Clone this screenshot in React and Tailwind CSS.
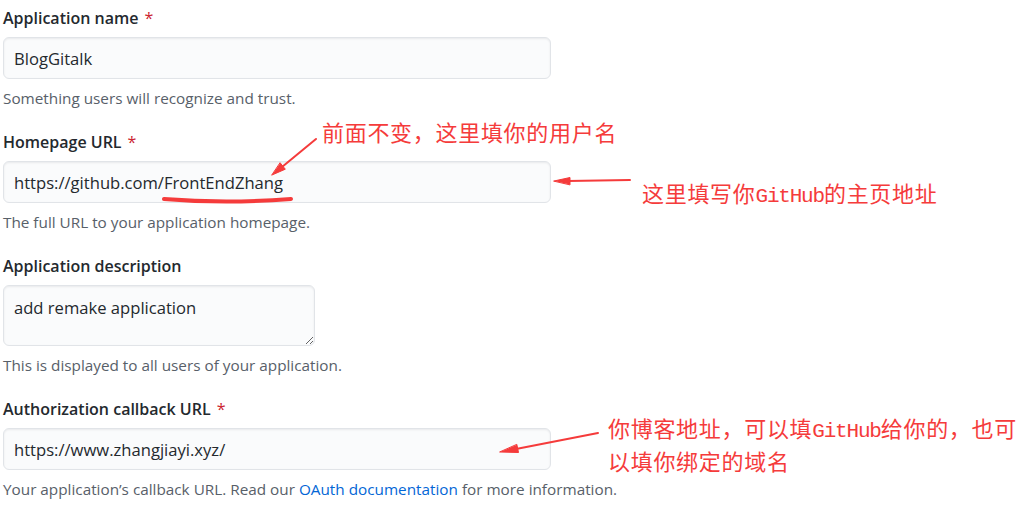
import React from 'react';

const fieldFont = { fontFamily: '"Open Sans", "Liberation Sans", sans-serif' };

const Field = ({ label, required, children, note }) => (
  <div className="flex flex-col">
    <label className="h-6 text-[16px] leading-6 font-semibold text-[#24292e]">
      {label}
      {required && <span className="ml-[6px] text-[#cb2431] font-normal">*</span>}
    </label>
    <div className="mt-[7px]">{children}</div>
    <p className="mt-2 h-[22px] text-[15.3px] leading-[22px] text-[#586069]">{note}</p>
  </div>
);

const TextInput = ({ value }) => (
  <input
    readOnly
    value={value}
    className="h-[42px] w-[548px] rounded-md border border-[#e1e4e8] bg-[#fafbfc] px-[10px] text-[16.6px] text-[#24292e] shadow-[inset_0_1px_2px_rgba(27,31,35,0.075)] outline-none"
  />
);

const GH = ({ children }) => (
  <span className="text-[21px] tracking-[-1.2px]" style={{ fontFamily: '"Liberation Mono", monospace' }}>
    {children}
  </span>
);

export default function App() {
  return (
    <div className="relative w-[1027px] h-[505px] overflow-hidden bg-white" style={fieldFont}>
      {/* Form */}
      <div className="flex flex-col gap-[21px] pl-[3px] pt-[6px]">
        <Field label="Application name" required note="Something users will recognize and trust.">
          <TextInput value="BlogGitalk" />
        </Field>
        <Field label="Homepage URL" required note="The full URL to your application homepage.">
          <TextInput value="https://github.com/FrontEndZhang" />
        </Field>
        <Field label="Application description" note="This is displayed to all users of your application.">
          <textarea
            readOnly
            defaultValue="add remake application"
            className="block h-[61px] w-[312px] rounded-md border border-[#e1e4e8] bg-[#fafbfc] px-[10px] pt-[10px] text-[16.6px] leading-6 text-[#24292e] shadow-[inset_0_1px_2px_rgba(27,31,35,0.075)] outline-none"
          />
        </Field>
        <Field
          label="Authorization callback URL"
          required
          note={
            <>
              Your application’s callback URL. Read our{' '}
              <a className="text-[#0366d6]">OAuth documentation</a> for more information.
            </>
          }
        >
          <TextInput value="https://www.zhangjiayi.xyz/" />
        </Field>
      </div>

      {/* Annotations */}
      <svg className="pointer-events-none absolute inset-0" width="1027" height="505">
        <g fill="#f53b3b" stroke="#f53b3b" strokeLinecap="round">
          <line x1="316" y1="139" x2="282" y2="167" strokeWidth="2" />
          <polygon points="272,175 285.3,169.2 280.3,163" strokeWidth="1" />
          <line x1="630" y1="180" x2="568" y2="181" strokeWidth="2" />
          <polygon points="554,181 570,177.5 570,184.5" strokeWidth="1" />
          <line x1="598" y1="433" x2="516" y2="449" strokeWidth="2" />
          <polygon points="500,452 518.5,452.5 516.9,444.7" strokeWidth="1" />
          <path d="M164 199 Q 225 204 291 199" fill="none" strokeWidth="4" />
        </g>
      </svg>

      <div
        className="absolute left-[322px] top-[117px] whitespace-nowrap text-[22px] leading-7 tracking-[0.7px] text-[#f53b3b]"
        style={{ fontFamily: '"Noto Sans CJK SC", sans-serif' }}
      >
        前面不变，这里填你的用户名
      </div>
      <div
        className="absolute left-[642px] top-[178px] whitespace-nowrap text-[22px] leading-7 tracking-[0.7px] text-[#f53b3b]"
        style={{ fontFamily: '"Noto Sans CJK SC", sans-serif' }}
      >
        这里填写你<GH>GitHub</GH>的主页地址
      </div>
      <div
        className="absolute left-[608px] top-[413px] whitespace-nowrap text-[22px] leading-7 tracking-[0.7px] text-[#f53b3b]"
        style={{ fontFamily: '"Noto Sans CJK SC", sans-serif' }}
      >
        你博客地址，可以填<GH>GitHub</GH>给你的，也可
        <br />
        以填你绑定的域名
      </div>
    </div>
  );
}
